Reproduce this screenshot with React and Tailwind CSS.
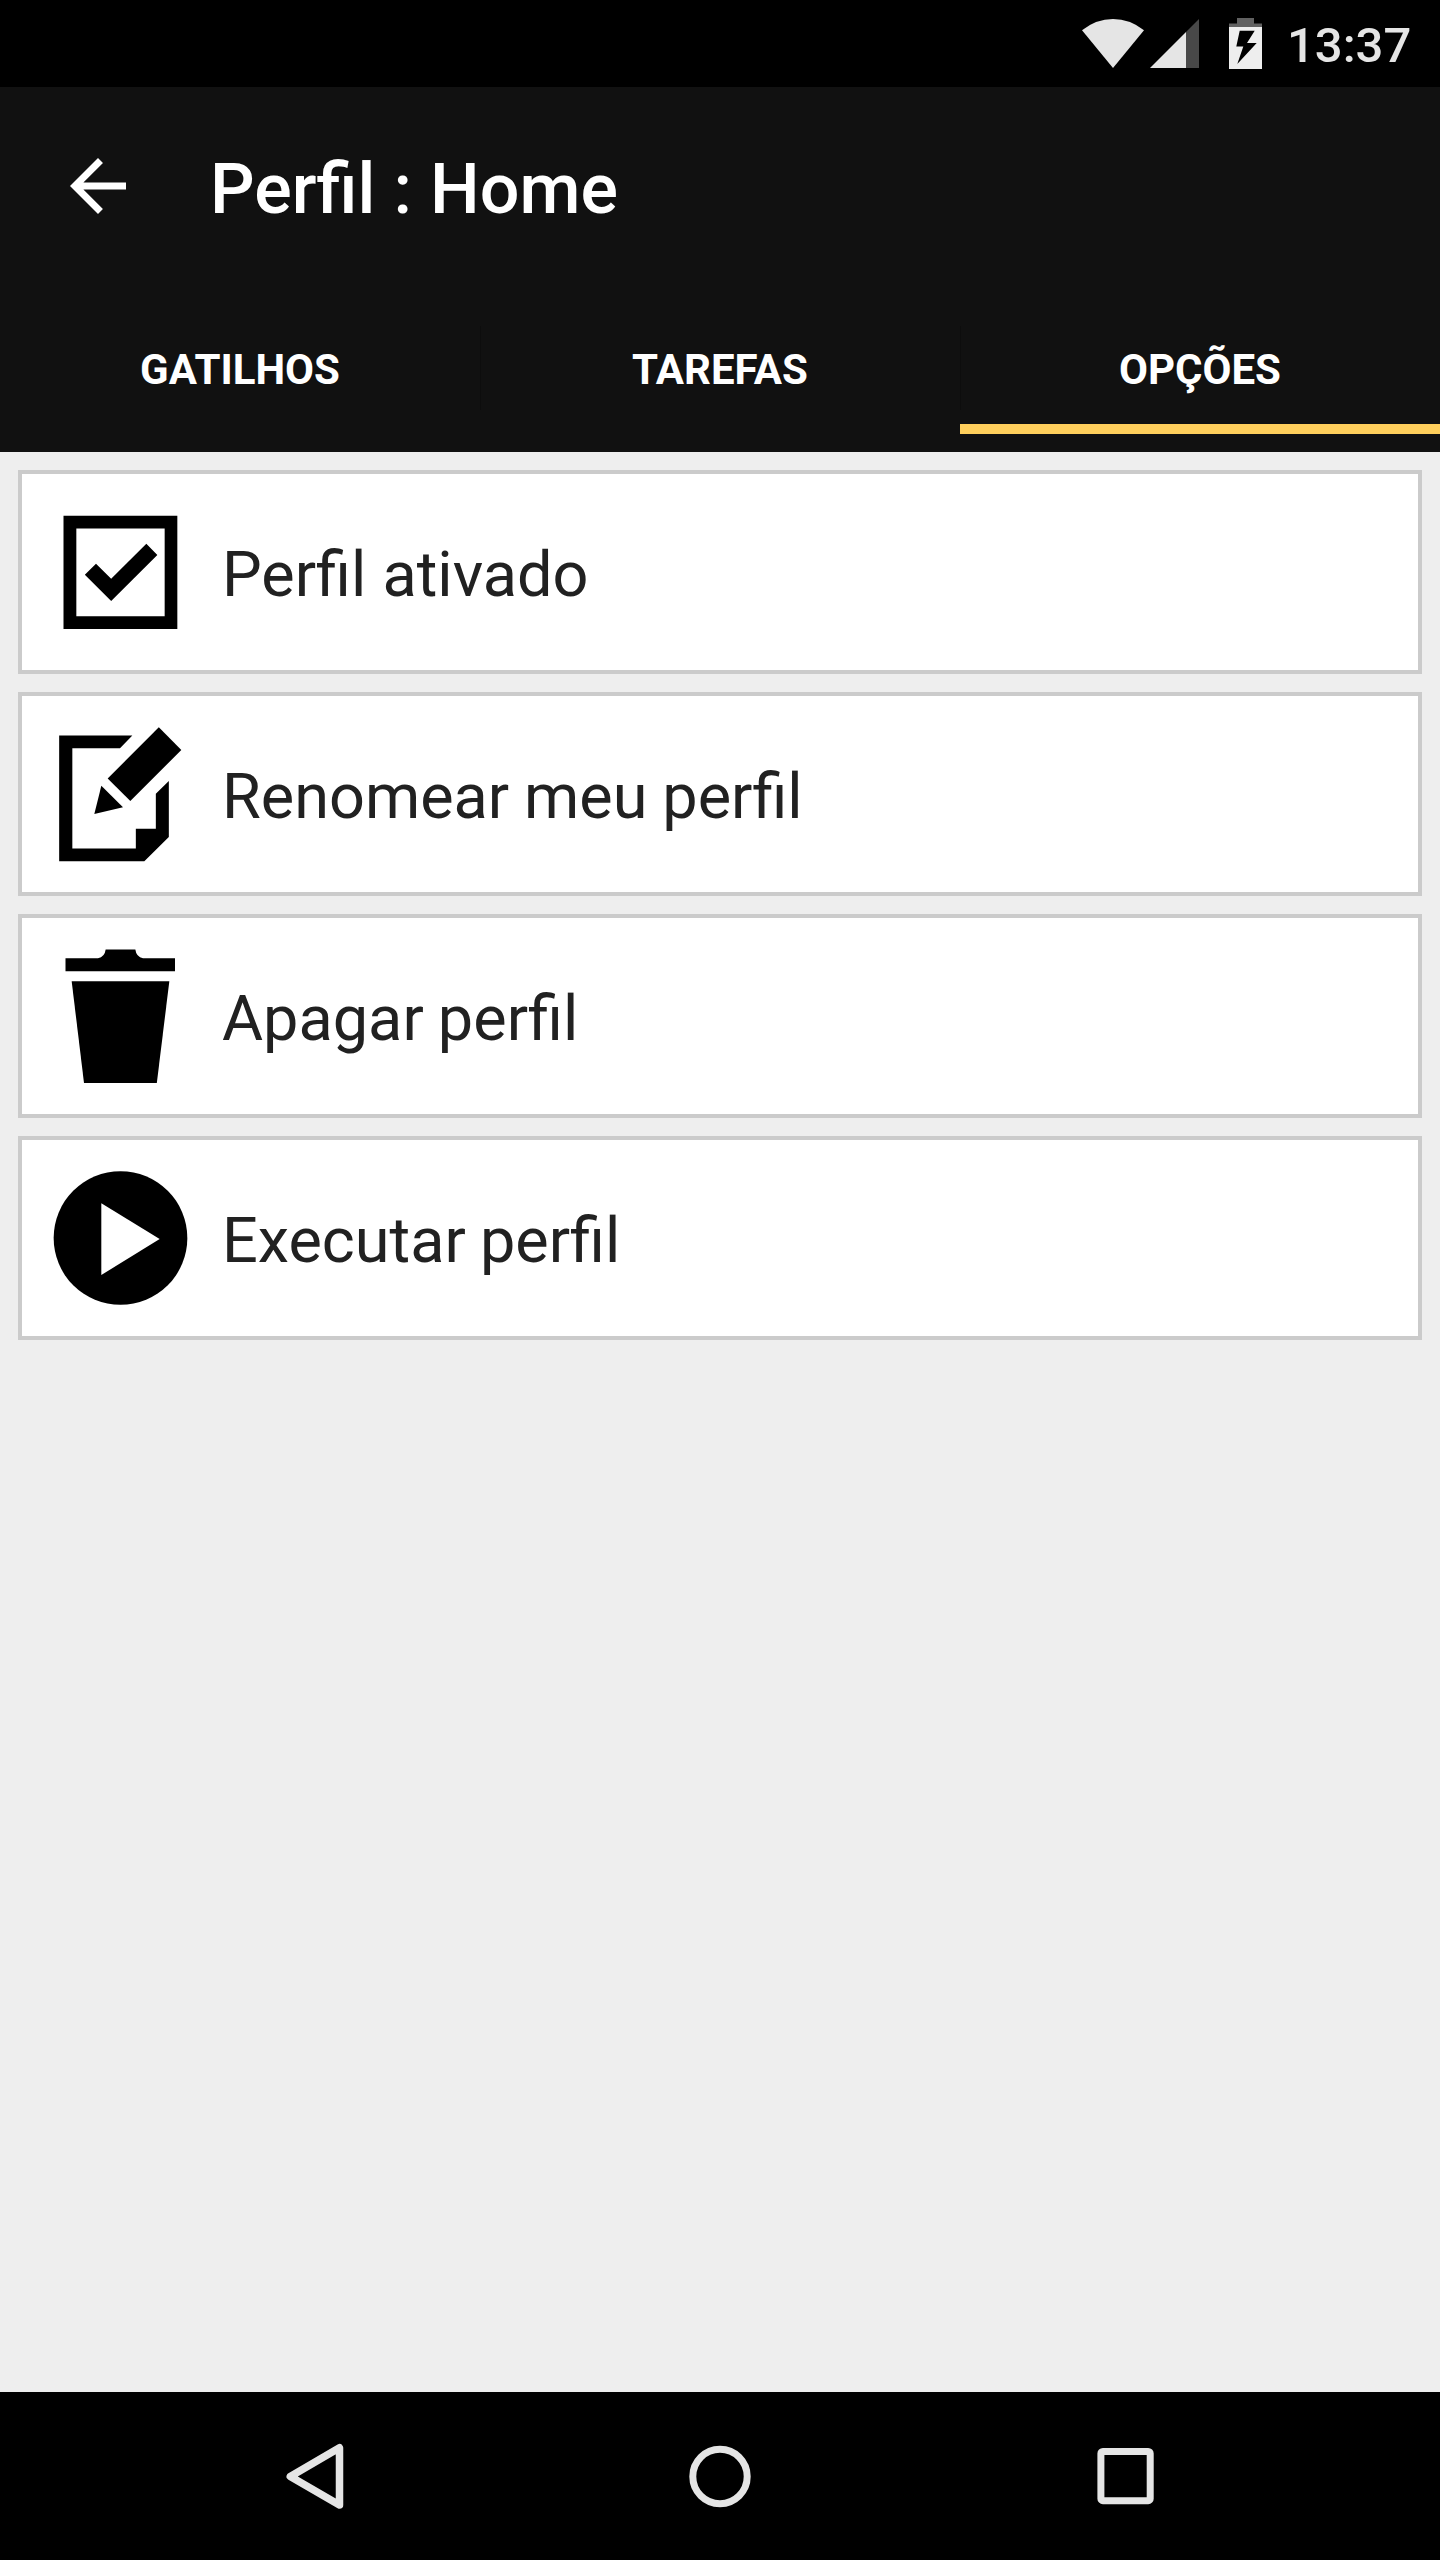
function CheckboxIcon() {
  return (
    <svg viewBox="66 42 588 588" className="size-[196px] shrink-0">
      <path fillRule="evenodd" d="M190.500 167H532V507H190.500ZM229 205.500V468.500H494V205.500Z" />
      <path d="M254.500 344L288 311L333.500 356L439 251L472 285L333.500 423Z" />
    </svg>
  );
}

function RenameIcon() {
  return (
    <svg viewBox="66 48 588 588" className="size-[196px] shrink-0">
      <path d="M177.500 166.500H397L360 205H217V505.500H407.500V446H467.500V341L506.500 303V471L433 543.500H177.500Z" />
      <path d="M476.500 142L544 210L391 363L323 295.500Z" />
      <path d="M304 317L369 382L283 402Z" />
    </svg>
  );
}

function TrashIcon() {
  return (
    <svg viewBox="66 54 588 588" className="size-[196px] shrink-0">
      <path d="M196.500 175H294Q314 171 317 148.500H406Q409 171 429 175H525V214H196.500Z" />
      <path d="M215 243.500H508L470.500 549H252Z" />
    </svg>
  );
}

function PlayIcon() {
  return (
    <svg viewBox="66 60 588 588" className="size-[196px] shrink-0">
      <circle cx="361.500" cy="354" r="200.500" />
      <path fill="#fff" d="M304 250L479 357L304 465Z" />
    </svg>
  );
}

const tabs = [
  { label: "GATILHOS", active: false },
  { label: "TAREFAS", active: false },
  { label: "OPÇÕES", active: true },
];

const options = [
  { label: "Perfil ativado", Icon: CheckboxIcon, spacing: "[word-spacing:0.5px]" },
  { label: "Renomear meu perfil", Icon: RenameIcon, spacing: "[word-spacing:-0.8px]" },
  { label: "Apagar perfil", Icon: TrashIcon, spacing: "[word-spacing:-1.5px]" },
  { label: "Executar perfil", Icon: PlayIcon, spacing: "[word-spacing:-1.5px]" },
];

function StatusBar() {
  return (
    <div className="flex h-[87px] shrink-0 items-start gap-[24px] bg-black pl-[1070px]">
      <svg viewBox="0 0 193 87" className="h-[87px] w-[193px] shrink-0">
        <path fill="#e5e5e5" d="M12 30.300Q26 19 43 19T74 30.300L43 68Z" />
        <path fill="#e5e5e5" d="M80 68L116 32V68Z" />
        <path fill="#484848" d="M116 32L129 19V68H116Z" />
        <path fill="#616161" d="M167 18H184V23.500H192V27.500H159V23.500H167Z" />
        <path fill="#eee" d="M159 27H192V69H159Z" />
        <path d="M169.700 30.700H184.700L177 43H186.700L167.300 64L173.300 46.500H166.300Z" />
      </svg>
      <span className="pt-[17px] text-[49px] leading-[58px] font-medium text-[#e5e5e5]">13:37</span>
    </div>
  );
}

function AppBar() {
  return (
    <header className="flex h-[365px] shrink-0 flex-col bg-[#111] text-white">
      <div className="flex h-[196px] items-center pt-[2px] pl-[56px]">
        <svg viewBox="0 0 24 24" fill="#fff" className="mr-[70px] size-[84px]">
          <path d="M20 11H7.830l5.590-5.590L12 4l-8 8 8 8 1.410-1.410L7.830 13H20v-2z" />
        </svg>
        <h1 className="pt-[6px] text-[70px] leading-[82px] font-medium [word-spacing:0.8px]">Perfil : Home</h1>
      </div>
      <nav className="grid h-[151px] grid-cols-3">
        {tabs.map((tab, i) => (
          <div key={tab.label} className="relative flex justify-center pt-[62px]">
            <span className="text-[42px] leading-[50px] font-bold">{tab.label}</span>
            {i > 0 && <span className="absolute top-[43px] left-0 h-[84px] w-px bg-[#0d0d0d]" />}
            {tab.active && <span className="absolute inset-x-0 bottom-0 h-[10px] bg-[#ffcf5c]" />}
          </div>
        ))}
      </nav>
    </header>
  );
}

function NavigationBar() {
  return (
    <footer className="flex h-[168px] shrink-0 items-center justify-between bg-black px-[266px]">
      <svg viewBox="0 0 98 98" className="size-[98px]" fill="none" stroke="#e5e5e5" strokeWidth="7" strokeLinejoin="round">
        <path d="M24.300 49.400L73.500 20.800V78Z" strokeWidth="7.500" />
      </svg>
      <svg viewBox="0 0 98 98" className="size-[98px]" fill="none" stroke="#e5e5e5" strokeWidth="7">
        <circle cx="49" cy="49.500" r="27.200" />
      </svg>
      <svg viewBox="0 0 98 98" className="size-[98px]" fill="none" stroke="#e5e5e5" strokeWidth="7">
        <rect x="24.900" y="24.400" width="49.300" height="49.300" rx="2" />
      </svg>
    </footer>
  );
}

export default function App() {
  return (
    <div className="flex h-[2560px] w-[1440px] flex-col overflow-hidden bg-[#eee] font-['Roboto',sans-serif]">
      <StatusBar />
      <AppBar />
      <main className="flex flex-1 flex-col gap-[18px] p-[18px]">
        {options.map(({ label, Icon, spacing }) => (
          <div key={label} className="flex h-[204px] items-center gap-[4px] border-4 border-[#cbcbcb] bg-white">
            <Icon />
            <span className={`pt-[6px] text-[63px] leading-[74px] text-[#212121] ${spacing}`}>{label}</span>
          </div>
        ))}
      </main>
      <NavigationBar />
    </div>
  );
}
